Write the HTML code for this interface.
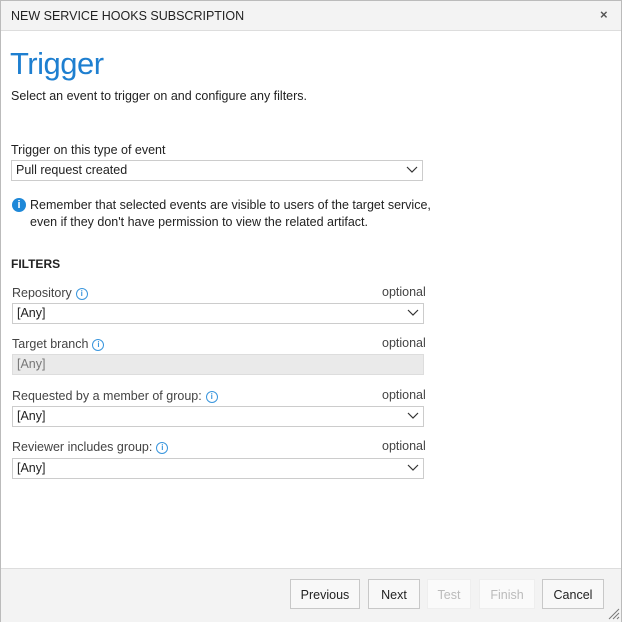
<!DOCTYPE html><html><head><style>
body{margin:0;width:622px;height:622px;overflow:hidden;font-family:"Liberation Sans",sans-serif;color:#222;background:#fff;position:relative}
.a{position:absolute}
.t{font-size:12.5px;white-space:nowrap}
.sel{position:absolute;left:12px;width:406px;height:19px;border:1px solid #ccc;background:#fff;font-size:12.5px;line-height:19px;padding-left:4px;box-sizing:content-box}
.sel svg{position:absolute;right:4px;top:5px}
.i{display:inline-block;width:10px;height:10px;border:1px solid #3a96dd;border-radius:50%;color:#3a96dd;font-size:8px;line-height:10px;text-align:center;font-weight:bold;vertical-align:1px;margin-left:4px}
.btn{position:absolute;top:579px;height:30px;border:1px solid #c8c8c8;background:#f8f8f8;font-size:12.5px;line-height:30px;text-align:center;box-sizing:border-box}
.dis{color:#bbb;background:#fafafa;border-color:#eee}
</style></head><body>
<div class="a" style="left:0;top:0;width:620px;height:620px;border:1px solid #bbb"></div>
<div class="a" style="left:1px;top:1px;width:620px;height:29px;background:#f3f3f3;border-bottom:1px solid #ddd"></div>
<div class="a t" style="left:11px;top:9px;font-size:12.5px">NEW SERVICE HOOKS SUBSCRIPTION</div>
<div class="a" style="left:600px;top:7px;font-size:13px;color:#555;font-weight:bold">×</div>
<div class="a" style="left:10px;top:46px;font-size:31px;letter-spacing:-0.5px;color:#1e7fd0">Trigger</div>
<div class="a t" style="left:11px;top:89px">Select an event to trigger on and configure any filters.</div>
<div class="a t" style="left:11px;top:143px">Trigger on this type of event</div>
<div class="sel" style="top:160px;left:11px">Pull request created<svg width="12" height="8"><path d="M1 1l5 5 5-5" fill="none" stroke="#333" stroke-width="1.2"/></svg></div>
<div class="a" style="left:12px;top:198px;width:14px;height:14px;border-radius:50%;background:#1e88d8;color:#fff;font-size:11px;font-weight:bold;text-align:center;line-height:14px">i</div>
<div class="a t" style="left:30px;top:197px;line-height:17px">Remember that selected events are visible to users of the target service,<br>even if they don't have permission to view the related artifact.</div>
<div class="a t" style="left:11px;top:257px;font-weight:bold;font-size:12px">FILTERS</div>

<div class="a t" style="left:12px;top:286px;color:#444">Repository<span class="i">i</span></div>
<div class="a t" style="left:382px;top:285px;color:#444">optional</div>
<div class="sel" style="top:303px">[Any]<svg width="12" height="8"><path d="M1 1l5 5 5-5" fill="none" stroke="#333" stroke-width="1.2"/></svg></div>

<div class="a t" style="left:12px;top:337px;color:#444">Target branch<span class="i">i</span></div>
<div class="a t" style="left:382px;top:336px;color:#444">optional</div>
<div class="sel" style="top:354px;background:#eaeaea;color:#777;border-color:#ddd">[Any]</div>

<div class="a t" style="left:12px;top:389px;color:#444">Requested by a member of group:<span class="i">i</span></div>
<div class="a t" style="left:382px;top:388px;color:#444">optional</div>
<div class="sel" style="top:406px">[Any]<svg width="12" height="8"><path d="M1 1l5 5 5-5" fill="none" stroke="#333" stroke-width="1.2"/></svg></div>

<div class="a t" style="left:12px;top:440px;color:#444">Reviewer includes group:<span class="i">i</span></div>
<div class="a t" style="left:382px;top:439px;color:#444">optional</div>
<div class="sel" style="top:458px">[Any]<svg width="12" height="8"><path d="M1 1l5 5 5-5" fill="none" stroke="#333" stroke-width="1.2"/></svg></div>

<div class="a" style="left:1px;top:568px;width:620px;height:53px;background:#f3f3f3;border-top:1px solid #ddd"></div>
<div class="btn" style="left:290px;width:70px">Previous</div>
<div class="btn" style="left:368px;width:52px">Next</div>
<div class="btn dis" style="left:427px;width:44px">Test</div>
<div class="btn dis" style="left:479px;width:56px">Finish</div>
<div class="btn" style="left:542px;width:62px">Cancel</div>
<svg class="a" style="left:606px;top:606px" width="14" height="14"><path d="M13 3L3 13M13 7L7 13M13 11L11 13" stroke="#777" stroke-width="1"/></svg>
</body></html>
